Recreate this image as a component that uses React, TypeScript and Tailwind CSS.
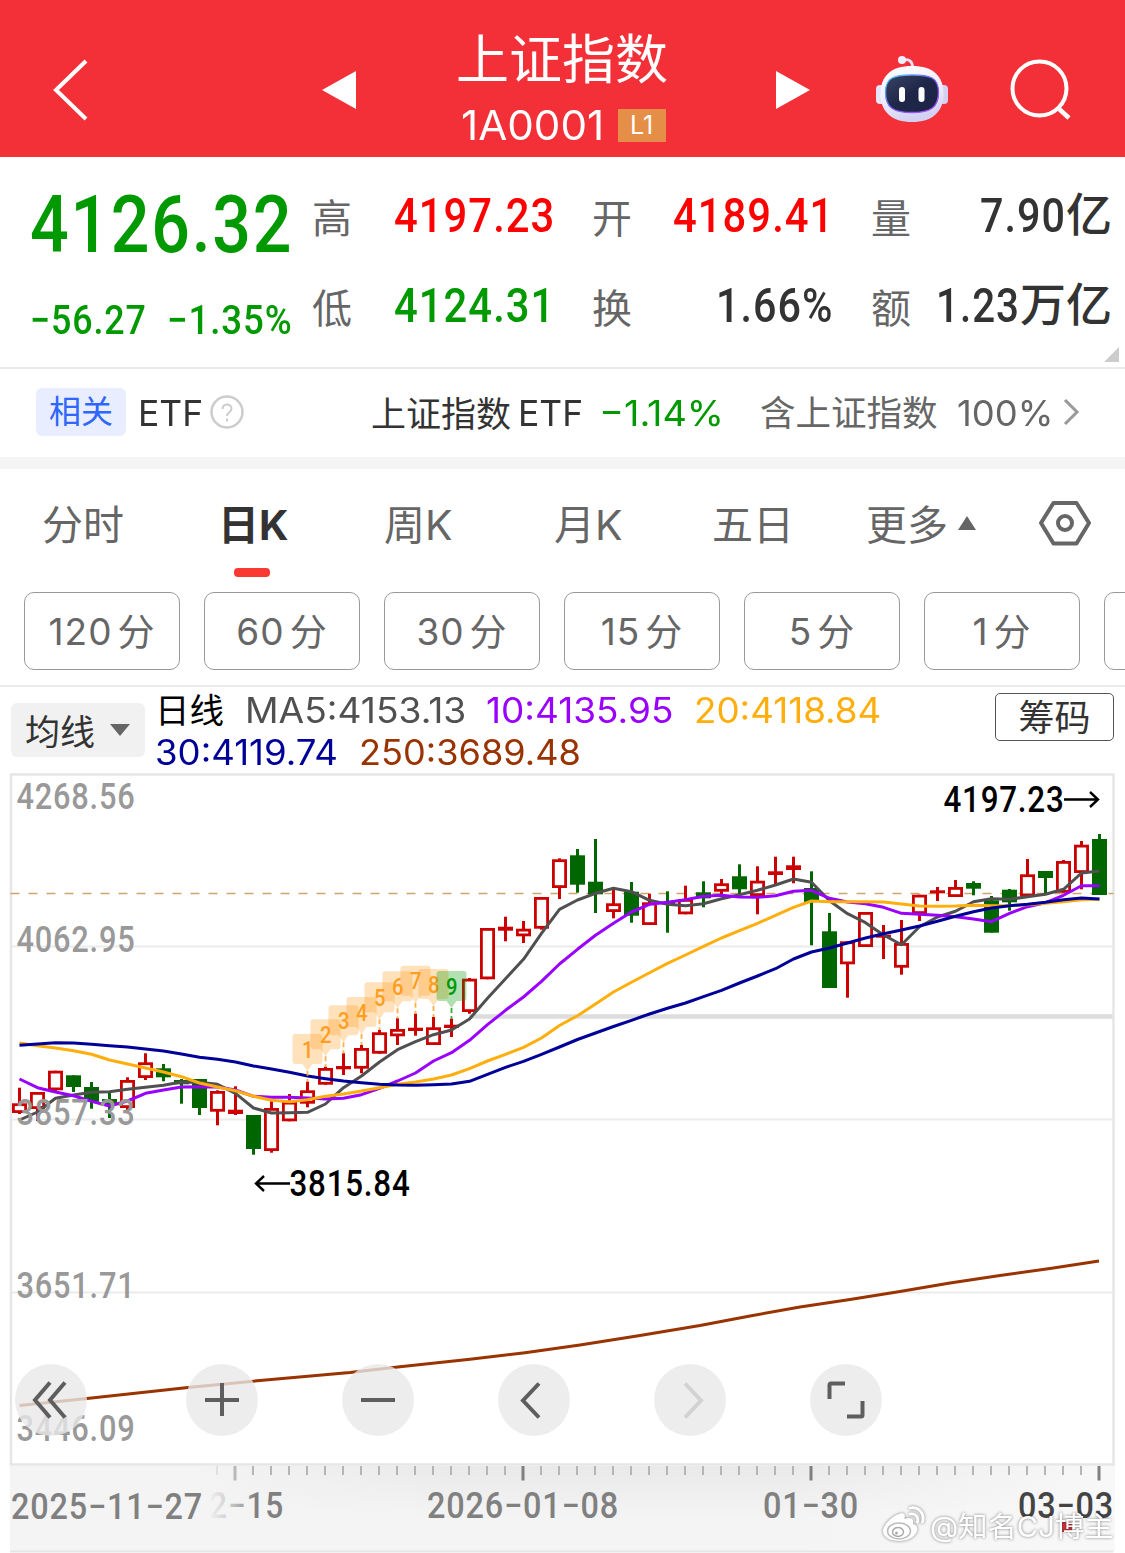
import { useLayoutEffect, useRef, useState } from 'react';
import type { ReactNode } from 'react';
import clsx from 'clsx';

function Fit({ width, className, children }: { width: number; className?: string; children: ReactNode }) {
    const ref = useRef<HTMLSpanElement>(null);
    const [scale, setScale] = useState(1);

    useLayoutEffect(() => {
        if (ref.current) setScale(width / ref.current.offsetWidth);
    }, [width]);

    return (
        <span className={clsx('inline-flex shrink-0 whitespace-nowrap leading-none', className)} style={{ width }}>
            <span ref={ref} className="inline-block shrink-0 origin-left" style={{ transform: `scaleX(${scale})` }}>
                {children}
            </span>
        </span>
    );
}

const din = "font-['Roboto'] font-medium tracking-[0.025em]";

function Robot() {
    return (
        <svg width="74" height="72" viewBox="875 53 74 72" fill="none">
            <defs>
                <linearGradient id="shell" x1="0" y1="0" x2="0.3" y2="1">
                    <stop offset="0" stopColor="#ffffff" />
                    <stop offset="0.6" stopColor="#efedfc" />
                    <stop offset="1" stopColor="#d3d1f3" />
                </linearGradient>
                <linearGradient id="rim" x1="0" y1="0" x2="1" y2="1">
                    <stop offset="0" stopColor="#46d7f0" />
                    <stop offset="0.5" stopColor="#7b5cf5" />
                    <stop offset="1" stopColor="#b04bff" />
                </linearGradient>
                <linearGradient id="visor" x1="0" y1="0" x2="1" y2="1">
                    <stop offset="0" stopColor="#3a4265" />
                    <stop offset="0.5" stopColor="#1f2749" />
                    <stop offset="1" stopColor="#1c2344" />
                </linearGradient>
            </defs>
            <path d="M903 59c5-1.500 9.500 1 9.500 7" stroke="#e4e2f7" strokeWidth="2.800" />
            <circle cx="902" cy="59" r="4" fill="#f1effc" />
            <rect x="876" y="84" width="9" height="19" rx="4" fill="#e6e4f8" />
            <rect x="939" y="84" width="9" height="19" rx="4" fill="#d3d0f1" />
            <path d="M912 65c21 0 31.500 10 31.500 28S932 121 912 121s-31.500-10-31.500-28S891 65 912 65z" fill="url(#shell)" />
            <path
                d="M912 74c19 0 26.500 3 26.500 17.500S931 111.500 912 111.500s-26.500-5.500-26.500-20S893 74 912 74z"
                fill="url(#visor)"
                stroke="url(#rim)"
                strokeWidth="1.300"
            />
            <rect x="899" y="86" width="6" height="15" rx="3" fill="#fff" />
            <rect x="918.500" y="86" width="6" height="15" rx="3" fill="#fff" />
        </svg>
    );
}

function Header() {
    return (
        <header className="flex h-[157px] items-center bg-[#f33038] pt-[22px] text-white">
            <svg className="ml-[52px]" width="38" height="64" fill="none" stroke="#fff" strokeWidth="4">
                <path d="M34 3 4 32l30 29" />
            </svg>
            <svg className="ml-[232px]" width="34" height="40" fill="#fff">
                <path d="M34 1v38L0 20z" />
            </svg>
            <div className="ml-[100px] flex w-[212px] flex-col items-center pt-[8px]">
                <h1 className="h-[66px] text-[53px] leading-[65px]">上证指数</h1>
                <div className="flex h-[66px] items-center gap-[14px] pb-[2px] pl-[2px]">
                    <Fit width={143} className="text-[41px]">1A0001</Fit>
                    <span className="flex h-[33px] w-12 items-center justify-center bg-[#e58e48] text-[25px]">L1</span>
                </div>
            </div>
            <svg className="ml-[108px]" width="34" height="40" fill="#fff">
                <path d="M0 1v38l34-19z" />
            </svg>
            <div className="ml-[65px]">
                <Robot />
            </div>
            <svg className="ml-[61px]" width="62" height="62" fill="none" stroke="#fff" strokeWidth="4">
                <circle cx="29.500" cy="29.500" r="27" />
                <path d="m48 49 11 10" strokeWidth="4.500" />
            </svg>
        </header>
    );
}

const quotes = [
    { label: '高', value: '4197.23', width: 161, unit: '', color: 'text-[#ff0000]' },
    { label: '开', value: '4189.41', width: 161, unit: '', color: 'text-[#ff0000]' },
    { label: '量', value: '7.90', width: 86, unit: '亿', color: 'text-[#333]' },
    { label: '低', value: '4124.31', width: 161, unit: '', color: 'text-[#009900]' },
    { label: '换', value: '1.66%', width: 118, unit: '', color: 'text-[#333]' },
    { label: '额', value: '1.23', width: 84, unit: '万亿', color: 'text-[#333]' },
];

function Quote() {
    return (
        <section className="relative flex h-[212px] border-b-2 border-[#ebebeb]">
            <div className="w-[312px] pl-[30px] text-[#009900]">
                <div className="flex h-[136px] items-center pt-[1px]">
                    <Fit width={263} className={clsx(din, 'text-[79px]')}>4126.32</Fit>
                </div>
                <div className="flex h-[54px] items-center gap-[20px]">
                    <Fit width={117} className={clsx(din, 'text-[41px]')}>−56.27</Fit>
                    <Fit width={126} className={clsx(din, 'text-[41px]')}>−1.35%</Fit>
                </div>
            </div>
            <div className="grid h-[194px] w-[802px] grid-cols-[243px_242px_241px] grid-rows-[90px_90px] gap-x-[37px] pt-[14px]">
                {quotes.map((q) => (
                    <div key={q.label} className="flex items-center justify-between">
                        <span className="pt-[6px] text-[40px] leading-none text-[#666]">{q.label}</span>
                        <span className={clsx('flex items-center', q.color)}>
                            <Fit width={q.width} className={clsx(din, 'text-[48px]')}>{q.value}</Fit>
                            {q.unit && <span className="-mt-[4px] text-[46px] font-medium leading-none">{q.unit}</span>}
                        </span>
                    </div>
                ))}
            </div>
            <svg className="absolute bottom-[5px] right-[6px]" width="15" height="15" fill="#ccc">
                <path d="M15 0v15H0z" />
            </svg>
        </section>
    );
}

function RelatedEtf() {
    return (
        <section className="flex h-[100px] items-center border-b-[12px] border-[#f4f4f4] pl-9 text-[#333]">
            <span className="-mt-[2px] flex h-12 w-[90px] items-center justify-center rounded-md bg-[#e8eeff] text-[32px] leading-none text-[#2f66ff]">
                相关
            </span>
            <Fit width={65} className="ml-[12px] text-[36px]">ETF</Fit>
            <svg className="-mt-[2px] ml-[6px]" width="36" height="36" fill="none" stroke="#ccc" strokeWidth="2.500">
                <circle cx="18" cy="18" r="15.500" />
                <path d="M13.500 15c0-6 9-6 9-.5 0 4-4.500 3.500-4.500 7.500M18 24.500v3" strokeWidth="2" />
            </svg>
            <span className="ml-[126px] pt-[2px] text-[35px] leading-none">上证指数</span>
            <Fit width={65} className="ml-[7px] text-[36px]">ETF</Fit>
            <Fit width={125} className="ml-[16px] text-[36px] text-[#009900]">−1.14%</Fit>
            <span className="ml-[36px] pt-[2px] text-[35.500px] leading-none text-[#666]">含上证指数</span>
            <Fit width={96} className="ml-[19px] text-[36px] text-[#666]">100%</Fit>
            <svg className="-mt-[2px] ml-[9px]" width="18" height="30" fill="none" stroke="#999" strokeWidth="3">
                <path d="m3 3 12 12L3 27" />
            </svg>
        </section>
    );
}

const periods = ['120', '60', '30', '15', '5', '1'];

function Periods() {
    return (
        <>
            <nav className="flex h-[123px] pt-[31px] text-[41px] leading-[50px] text-[#666]">
                <span className="ml-[42px] w-[176px]">分时</span>
                <span className="flex w-[166px] flex-col font-bold text-[#333]">
                    日K
                    <i className="ml-[16px] mt-[18px] h-[9px] w-9 rounded bg-[#fa3a32]" />
                </span>
                <span className="w-[170px]">周K</span>
                <span className="w-[158px]">月K</span>
                <span className="w-[154px]">五日</span>
                <span className="flex w-[172px]">
                    更多
                    <svg className="ml-[9px] mt-[16px]" width="20" height="15" fill="#666">
                        <path d="M10 0 19 14H1z" />
                    </svg>
                </span>
                <svg width="54" height="48" fill="none" stroke="#666" strokeWidth="4">
                    <path d="M15.500 3h23L51 23 38.500 43.500h-23L3 23z" strokeLinejoin="round" />
                    <circle cx="27" cy="23" r="7" />
                </svg>
            </nav>
            <div className="flex h-[95px] gap-6 overflow-hidden border-b-2 border-[#ebebeb] pl-6">
                {periods.map((p) => (
                    <span
                        key={p}
                        className="flex h-[78px] w-[156px] shrink-0 items-center justify-center gap-[5px] rounded-[10px] border-[1.500px] border-[#999] text-[37px] leading-none tracking-[1px] text-[#666]"
                    >
                        <span>{p}</span>
                        <span className="pt-[3px]">分</span>
                    </span>
                ))}
                <span className="h-[78px] w-[156px] shrink-0 rounded-[10px] border-[1.500px] border-[#999]" />
            </div>
        </>
    );
}

function Legend() {
    return (
        <div className="flex h-[86px] text-[35px] leading-none">
            <span className="ml-[11px] mt-4 flex h-[54px] w-[134px] items-center rounded-md bg-[#f1f1f1] pl-[14px] text-[#333]">
                <span className="pt-[4px]">均线</span>
                <svg className="ml-[14px]" width="22" height="14" fill="#666">
                    <path d="M1 1h20L11 13z" strokeLinejoin="round" />
                </svg>
            </span>
            <div className="ml-[10px] flex w-[840px] flex-col pt-[2px]">
                <div className="flex h-[42px] items-center">
                    <span className="pt-[2px] text-[34.500px] text-black">日线</span>
                    <Fit width={221} className="ml-[21px] text-[#505050]">MA5:4153.13</Fit>
                    <Fit width={187} className="ml-[20px] text-[#9900ff]">10:4135.95</Fit>
                    <Fit width={187} className="ml-[21px] text-[#ffae0d]">20:4118.84</Fit>
                </div>
                <div className="flex h-[42px] items-center">
                    <Fit width={183} className="text-[#000099]">30:4119.74</Fit>
                    <Fit width={222} className="ml-[21px] text-[#993300]">250:3689.48</Fit>
                </div>
            </div>
            <span className="mt-[6px] flex h-12 w-[119px] items-center justify-center rounded-[5px] border-[1.500px] border-[#555] pt-[2px] text-[36px] text-[#333]">
                筹码
            </span>
        </div>
    );
}

const x = (i: number) => 19.5 + i * 18;

// [up, high, top of body, bottom of body, low]
const candles: [number, number, number, number, number][] = [
    [1, 1087.7, 1103.3, 1113, 1114],
    [1, 1092, 1092, 1109, 1121],
    [1, 1070.7, 1070.7, 1090.3, 1092],
    [0, 1075.3, 1075.3, 1087, 1092],
    [0, 1082, 1087, 1101.7, 1108.7],
    [0, 1093, 1099, 1105, 1118],
    [1, 1077.3, 1080, 1108, 1112],
    [1, 1053.3, 1062.3, 1078, 1080],
    [0, 1064, 1068.3, 1077.3, 1081.3],
    [0, 1079, 1080, 1084.3, 1103.7],
    [0, 1079, 1079, 1108, 1115],
    [1, 1090.3, 1091, 1111.7, 1125.3],
    [1, 1086.3, 1109.7, 1114, 1115],
    [0, 1115, 1115, 1149, 1154.7],
    [1, 1099.3, 1108, 1151, 1152.7],
    [1, 1094, 1101.7, 1121.3, 1121.3],
    [1, 1081.7, 1090.3, 1103.7, 1107.3],
    [1, 1066.7, 1068, 1084.7, 1084.7],
    [1, 1053.3, 1066, 1069.3, 1075],
    [1, 1045, 1048, 1068.7, 1073.3],
    [1, 1030, 1032.3, 1053.7, 1053.7],
    [1, 1018.3, 1029, 1036.3, 1045],
    [1, 1013.7, 1027.7, 1031, 1035.7],
    [1, 1017, 1027.3, 1045, 1045],
    [1, 1018.7, 1024.7, 1028, 1037],
    [1, 978, 978.7, 1012, 1013.7],
    [1, 928, 928, 979.3, 979.3],
    [1, 916.7, 926.7, 930.7, 941.3],
    [1, 921, 928.7, 936.3, 943],
    [1, 897, 897, 928.7, 929.7],
    [1, 858.3, 859.3, 888, 899],
    [0, 849, 855.3, 884.7, 892.7],
    [0, 839, 881.7, 894.3, 913],
    [1, 889.3, 903.3, 912, 918.3],
    [0, 882, 891.7, 915.7, 922.7],
    [1, 893.7, 902.3, 925, 925],
    [0, 891.3, 902, 904, 932.7],
    [1, 885.7, 899, 914.3, 914.3],
    [0, 881.3, 892.3, 898.3, 907.3],
    [1, 879, 883.3, 891.7, 894.7],
    [0, 864.3, 876.3, 889.3, 894],
    [1, 866.3, 880.7, 896, 914.3],
    [1, 856.7, 871.3, 875, 884],
    [1, 856.7, 865.3, 870, 883.3],
    [0, 871.3, 888, 902, 945.3],
    [0, 913, 931.3, 988, 988],
    [1, 941.3, 941.3, 964.3, 997.7],
    [1, 912, 912, 947, 947],
    [1, 925, 934.7, 937.7, 959],
    [1, 920, 943, 967.7, 974.7],
    [1, 894.7, 894.7, 914, 921],
    [1, 887, 890.3, 893.3, 901],
    [1, 880, 887, 897, 897],
    [0, 881.3, 883, 888.7, 895.3],
    [0, 896, 900.3, 932.7, 932.7],
    [0, 889, 889.7, 902.3, 910.7],
    [1, 859, 874.3, 896.3, 896.3],
    [0, 871, 871, 878, 893.3],
    [1, 860, 861, 892.7, 892.7],
    [1, 841, 844.7, 873, 889.3],
    [0, 834, 839, 895, 895],
];

const averages = [
    {
        color: '#505050',
        ys: [
            1120, 1112, 1098.3, 1095, 1092.3, 1091.7, 1089.3, 1087.3, 1085.3, 1082, 1082.3, 1084.3, 1093.3, 1108, 1113,
            1112.7, 1112.3, 1104, 1087.7, 1076, 1062, 1049.7, 1041.7, 1034.7, 1030, 1019, 998.3, 978.7, 959.3, 933.3,
            909.3, 900, 893.3, 888.3, 891.7, 900.3, 904.3, 905.7, 903.7, 898.7, 894.7, 890.3, 885, 879, 882.3, 900.7,
            913.7, 922.7, 935, 944.7, 926.7, 917, 911.3, 901.7, 898.7, 899.3, 896.7, 894.3, 889.3, 873, 871,
        ],
    },
    {
        color: '#9900ff',
        ys: [
            1079, 1087.7, 1092, 1095.7, 1101.3, 1106, 1101, 1093.3, 1090, 1087, 1086.7, 1087, 1090, 1096.3, 1097.3,
            1097.3, 1098, 1099, 1098.3, 1094.7, 1088.3, 1081, 1073, 1061, 1052.7, 1040.3, 1024.7, 1010.3, 997, 981.3,
            964, 949.3, 935.3, 923.3, 912, 904.3, 902.3, 899.7, 896.3, 895.3, 897, 897.3, 895.7, 891.3, 890.3, 898.3,
            902, 903.7, 907.3, 913.3, 914.3, 915.3, 916.7, 919, 921.7, 913.3, 906.7, 902.7, 895.3, 885.7, 885.7,
        ],
    },
    {
        color: '#ffae0d',
        ys: [
            1043, 1045.7, 1048, 1050.7, 1054.3, 1060, 1064, 1068, 1072, 1076.7, 1083, 1087, 1090.7, 1096.3, 1100.3,
            1101.7, 1099.7, 1096.3, 1094, 1091, 1087.7, 1084.3, 1082, 1079, 1075, 1068.7, 1061, 1054.3, 1047.3, 1038,
            1025.5, 1015.7, 1004, 992, 982.3, 972.7, 963.3, 955, 946.3, 938, 930.7, 923.3, 915.3, 907.3, 901, 901.7,
            901.7, 901.7, 902, 904, 906, 906.3, 906, 905.3, 905.7, 905.7, 904.7, 903.3, 901.7, 899.7, 899.3,
        ],
    },
    {
        color: '#000099',
        ys: [
            1045.3, 1044, 1042.7, 1043, 1044.3, 1045.7, 1047, 1049, 1051, 1054, 1057.3, 1059.3, 1062, 1066, 1069,
            1072.3, 1076, 1078.7, 1081, 1082.7, 1084.3, 1085, 1085.3, 1084.7, 1084, 1081.3, 1074.3, 1067.3, 1061.3,
            1054.3, 1047, 1039.5, 1033, 1026.5, 1020.3, 1014, 1008.3, 1003, 996.7, 990.3, 983, 976, 968.7, 959, 952,
            948, 943, 938, 933.7, 930, 926, 921.3, 916.3, 911.7, 908, 905.7, 904.3, 902.3, 899.7, 898, 899,
        ],
    },
];

// Top edge of each sequence flag; flag 1 belongs to candle 16.
const flags = [1034, 1019.3, 1005.3, 997, 982.3, 971.3, 965.7, 969, 971];

const levels: [string, number][] = [
    ['4268.56', 809],
    ['4062.95', 952],
    ['3857.33', 1125],
    ['3651.71', 1298],
    ['3446.09', 1441],
];

function Candle({ i }: { i: number }) {
    const [up, high, top, bottom, low] = candles[i];
    const c = x(i);
    const color = up ? '#cc0000' : '#006600';
    const hollow = up && bottom - top > 6;

    return (
        <g>
            <path d={`M${c} ${high}V${low}`} stroke={color} strokeWidth="3" />
            {hollow ? (
                <rect x={c - 6.1} y={top + 1.4} width="12.200" height={bottom - top - 2.8} fill="#fff" stroke={color} strokeWidth="2.800" />
            ) : (
                <rect x={c - 7.5} y={top} width="15" height={bottom - top} fill={color} />
            )}
        </g>
    );
}

function Flag({ n }: { n: number }) {
    const c = x(15 + n);
    const top = flags[n - 1];
    const last = n === 9;
    const color = last ? '#009900' : '#ff9d1e';

    return (
        <g>
            <path
                d={`M${c - 12} ${top}h24q3 0 3 3v24q0 3-3 3h-7l-5 7-5-7h-7q-3 0-3-3v-24q0-3 3-3z`}
                fill={color}
                fillOpacity="0.3"
            />
            <path d={`M${c} ${top + 37}V${candles[15 + n][1]}`} stroke={color} strokeWidth="1.800" strokeDasharray="5 3" opacity="0.8" />
            <text x={c - 5.5} y={top + 23.5} fontSize="23" textLength="12" lengthAdjust="spacingAndGlyphs" fill={color} className={din}>
                {n}
            </text>
        </g>
    );
}

function Chart() {
    return (
        <svg className="block" width="1125" height="780" viewBox="0 773 1125 780">
            <defs>
                <linearGradient id="axis" x1="0" y1="0" x2="0" y2="1">
                    <stop offset="0" stopColor="#e9e9e9" />
                    <stop offset="0.6" stopColor="#f4f4f4" />
                </linearGradient>
                <linearGradient id="axisFade" x1="0" y1="0" x2="1" y2="0">
                    <stop offset="0.16" stopColor="#f4f4f4" />
                    <stop offset="0.4" stopColor="#f4f4f4" stopOpacity="0" />
                    <stop offset="0.7" stopColor="#f8f8f8" stopOpacity="0" />
                    <stop offset="1" stopColor="#f8f8f8" />
                </linearGradient>
                <linearGradient id="dateFade" gradientUnits="userSpaceOnUse" x1="208" y1="0" x2="256" y2="0">
                    <stop offset="0" stopColor="#808080" stopOpacity="0" />
                    <stop offset="0.4" stopColor="#808080" stopOpacity="0.3" />
                    <stop offset="1" stopColor="#808080" />
                </linearGradient>
            </defs>

            <g stroke="#ebebeb" strokeWidth="2">
                <path d="M12 946.500h1101M12 1119.500h1101M12 1292.500h1101" />
                <path d="M469 1016.500h644" stroke="#ddd" strokeWidth="4.500" />
                <rect x="11" y="774.500" width="1102.500" height="690" fill="none" stroke="#e6e6e6" strokeWidth="2.500" />
            </g>

            <path d="M10.500 893.500h1103" stroke="#cfa468" strokeWidth="1.400" strokeDasharray="9 9" />
            {candles.map((_, i) => (
                <Candle key={i} i={i} />
            ))}
            <g fill="none" strokeWidth="3" strokeLinejoin="round">
                {averages.map((a) => (
                    <polyline key={a.color} stroke={a.color} points={a.ys.map((y, i) => `${x(i)},${y}`).join(' ')} />
                ))}
                <path
                    stroke="#993300"
                    d="M19.500 1405.500 87 1398.500 188 1387.500 260 1380.500 350 1372.500 400 1366.700 470 1359.300 525 1352.700 580 1345 640 1335.500 700 1325.500 750 1316 800 1307 850 1299.500 900 1291.500 950 1283 1000 1275.500 1050 1268.500 1099 1261"
                />
            </g>
            {flags.map((_, i) => (
                <Flag key={i} n={i + 1} />
            ))}

            <g className={din} fontSize="36" fill="#999">
                {levels.map(([label, y]) => (
                    <text key={label} x="16.500" y={y} textLength="119" lengthAdjust="spacingAndGlyphs">
                        {label}
                    </text>
                ))}
            </g>
            <g className={din} fontSize="36" fill="#000">
                <text x="943.500" y="812" textLength="121" lengthAdjust="spacingAndGlyphs">4197.23</text>
                <text x="289.500" y="1196" textLength="121" lengthAdjust="spacingAndGlyphs">3815.84</text>
            </g>
            <path d="M1064 799.500h34M1090 792l8 7.500-8 7.500M290 1183.500h-34M264 1176l-8 7.500 8 7.500" stroke="#000" strokeWidth="2.400" fill="none" />

            {/* time axis */}
            <rect x="10" y="1466" width="1105" height="85" fill="url(#axis)" />
            <rect x="10" y="1466" width="1105" height="85" fill="url(#axisFade)" />
            <path d="M10 1551.500h1103.500" stroke="#e6e6e6" strokeWidth="2" />
            {Array.from({ length: 50 }, (_, k) => {
                const major = k >= 1 && (k - 1) % 16 === 0;
                return (
                    <path
                        key={k}
                        d={`M${217 + k * 18} 1466v${major ? 14.5 : 9}`}
                        stroke={major ? '#808080' : '#b5b5b5'}
                        strokeWidth={major ? 3 : 2}
                        opacity={k === 0 ? 0.3 : k === 1 ? 0.5 : 1}
                    />
                );
            })}
            <g className={din} fontSize="36" fill="#808080">
                <text x="209" y="1518" textLength="75" lengthAdjust="spacingAndGlyphs" fill="url(#dateFade)">2−15</text>
                <text x="11" y="1519" textLength="192" lengthAdjust="spacingAndGlyphs">2025−11−27</text>
                <text x="427" y="1518" textLength="192" lengthAdjust="spacingAndGlyphs">2026−01−08</text>
                <text x="763" y="1518" textLength="96" lengthAdjust="spacingAndGlyphs">01−30</text>
                <text x="1018" y="1518" textLength="96" lengthAdjust="spacingAndGlyphs" fill="#444">03−03</text>
            </g>
            <rect x="1062" y="1522" width="10" height="10" fill="#cc3a40" />
        </svg>
    );
}

const tools = [
    { left: 'ml-0', d: 'M35 18.500 20 36 35 53.500M50 18.500 35 36 50 53.500' },
    { left: 'ml-[99px]', d: 'M19 36h34M36 19v33' },
    { left: 'ml-[84px]', d: 'M19 36h34' },
    { left: 'ml-[84px]', d: 'M41 19.500 25 36.500 41 53.500' },
    { left: 'ml-[84px]', d: 'M31 19.500 47 36.500 31 53.500', off: true },
    { left: 'ml-[84px]', d: 'M19.500 35V21q0-1.500 1.500-1.500h14M37 52.500h14q1.500 0 1.500-1.500V37' },
];

function ChartTools() {
    return (
        <div className="absolute left-[15px] top-[591px] flex">
            {tools.map((t, i) => (
                <svg key={i} className={clsx('rounded-full bg-[#e8e8e8]/80', t.left)} width="72" height="72" fill="none">
                    <path d={t.d} stroke={t.off ? '#d2d2d2' : '#5e5e5e'} strokeWidth="4" />
                </svg>
            ))}
        </div>
    );
}

function Watermark() {
    return (
        <div className="absolute left-[882px] top-[732px] flex items-center gap-[4px] text-white [filter:drop-shadow(0_0_1.500px_rgba(0,0,0,0.5))]">
            <svg width="44" height="40" viewBox="0 0 44 40" fill="none">
                <path
                    d="M17 9c4-2 7 0 5.500 5 5-2 10-1 8.500 5 4 1 5 4 4 7-2 6-9 10-18 10C8 36 1 32 1 26 1 20 10 11 17 9z"
                    fill="#fff"
                />
                <ellipse cx="17" cy="26" rx="11.500" ry="8" stroke="#bbb" strokeWidth="1.500" />
                <ellipse cx="16" cy="27" rx="5.500" ry="4.500" stroke="#aaa" strokeWidth="1.500" />
                <circle cx="14.500" cy="28" r="1.500" fill="#aaa" />
                <path d="M28 9c5-1 9 3 7.500 8M28 3c8-2 15 5 12.500 14" stroke="#fff" strokeWidth="2.800" strokeLinecap="round" />
            </svg>
            <Fit width={183} className="pt-[4px] text-[28px]">@知名CJ博主</Fit>
        </div>
    );
}

export default function App() {
    return (
        <main className="h-[1553px] w-[1125px] overflow-hidden bg-white font-['Inter','Noto_Sans_CJK_SC',sans-serif]">
            <Header />
            <Quote />
            <RelatedEtf />
            <Periods />
            <Legend />
            <div className="relative">
                <Chart />
                <ChartTools />
                <Watermark />
            </div>
        </main>
    );
}
